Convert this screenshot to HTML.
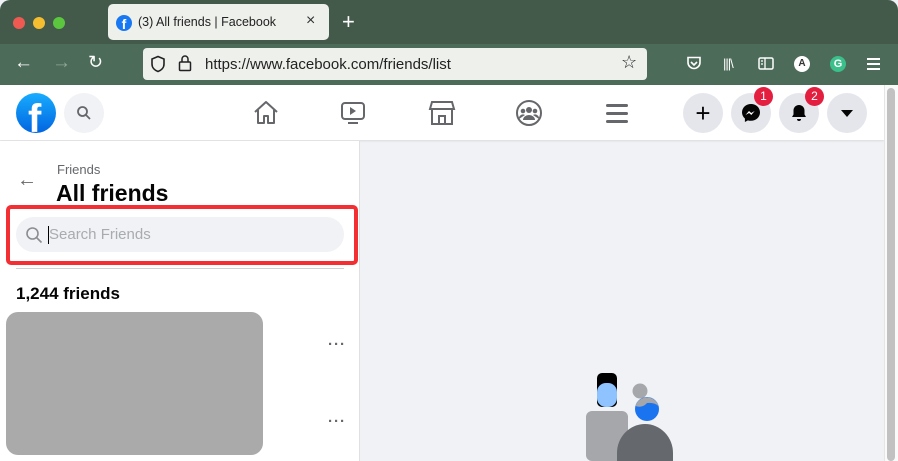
<!DOCTYPE html>
<html><head><style>
*{margin:0;padding:0;box-sizing:border-box}
body{width:898px;height:461px;overflow:hidden;font-family:"Liberation Sans",sans-serif;background:#f0f2f5;position:relative}
.a{position:absolute}
</style></head><body>
<div class="a" style="left:0;top:0;width:898px;height:44px;background:#435a4b;border-radius:10px 10px 0 0"></div>
<div class="a" style="left:13px;top:17px;width:12px;height:12px;border-radius:50%;background:#ee5a52"></div>
<div class="a" style="left:33px;top:17px;width:12px;height:12px;border-radius:50%;background:#f5bd30"></div>
<div class="a" style="left:53px;top:17px;width:12px;height:12px;border-radius:50%;background:#5ac73f"></div>
<div class="a" style="left:108px;top:4px;width:221px;height:36px;background:#eef0ec;border-radius:5px"></div>
<div class="a" style="left:116px;top:15px;width:16px;height:16px;border-radius:50%;background:#1877f2;color:#fff;font-weight:bold;font-size:14px;text-align:center;line-height:19px;overflow:hidden">f</div>
<div class="a" style="left:138px;top:15px;font-size:12.5px;color:#222">(3) All friends | Facebook</div>
<div class="a" style="left:306px;top:12px;font-size:16px;color:#333">×</div>
<div class="a" style="left:342px;top:9px;font-size:22px;color:#fff;font-weight:300">+</div>
<div class="a" style="left:0;top:44px;width:898px;height:41px;background:#4d6b59"></div>
<div class="a" style="left:14px;top:52px;font-size:19px;color:#fff">←</div>
<div class="a" style="left:52px;top:52px;font-size:19px;color:#8fa598">→</div>
<div class="a" style="left:88px;top:52px;font-size:18px;color:#fff">↻</div>
<div class="a" style="left:143px;top:48px;width:504px;height:32px;background:#eef0ec;border-radius:4px"></div>
<svg class="a" style="left:150px;top:55px" width="16" height="18" viewBox="0 0 16 18"><path d="M8 1.5L2 4v5c0 4 3 6.5 6 7.5 3-1 6-3.5 6-7.5V4z" fill="none" stroke="#222" stroke-width="1.6"/></svg>
<svg class="a" style="left:178px;top:54px" width="14" height="18" viewBox="0 0 14 18"><rect x="1.5" y="8" width="11" height="8.5" rx="1" fill="none" stroke="#222" stroke-width="1.5"/><path d="M4 8V5a3 3 0 0 1 6 0v3" fill="none" stroke="#222" stroke-width="1.5"/></svg>
<div class="a" style="left:205px;top:56px;font-size:15px;color:#222">https://www.facebook.com/friends/list</div>
<div class="a" style="left:621px;top:52px;font-size:18px;color:#222">☆</div>
<svg class="a" style="left:686px;top:56px" width="16" height="15" viewBox="0 0 16 15"><path d="M2 1.5h12v5a6 6 0 0 1-12 0z" fill="none" stroke="#fff" stroke-width="1.6"/><path d="M5 6l3 3 3-3" fill="none" stroke="#fff" stroke-width="1.6"/></svg>
<div class="a" style="left:723px;top:56px;font-size:13px;color:#fff;letter-spacing:-1px">|||\</div>
<svg class="a" style="left:758px;top:57px" width="16" height="13" viewBox="0 0 16 13"><rect x="1" y="1" width="14" height="11" rx="1.5" fill="none" stroke="#fff" stroke-width="1.5"/><path d="M7 1v11M3 4h2M3 7h2" stroke="#fff" stroke-width="1.3"/></svg>
<div class="a" style="left:794px;top:56px;width:16px;height:16px;border-radius:50%;background:#fff;color:#333;font-size:10px;font-weight:bold;text-align:center;line-height:16px">A</div>
<div class="a" style="left:830px;top:56px;width:16px;height:16px;border-radius:50%;background:#3bbf8b;color:#fff;font-size:11px;font-weight:bold;text-align:center;line-height:16px">G</div>
<div class="a" style="left:867px;top:58px;width:13px;height:2px;background:#fff;box-shadow:0 5px 0 #fff,0 10px 0 #fff"></div>
<div class="a" style="left:0;top:85px;width:884px;height:55px;background:#fff;box-shadow:0 1px 2px rgba(0,0,0,.1)"></div>
<div class="a" style="left:16px;top:93px;width:40px;height:40px;border-radius:50%;background:linear-gradient(#18acfe,#0165e1);overflow:hidden"><div style="position:absolute;left:12px;top:4px;color:#fff;font-weight:bold;font-size:40px;line-height:44px">f</div></div>
<div class="a" style="left:64px;top:93px;width:40px;height:40px;border-radius:50%;background:#f0f2f5"></div>
<svg class="a" style="left:76px;top:105px" width="16" height="16" viewBox="0 0 16 16"><circle cx="6.5" cy="6.5" r="4.5" fill="none" stroke="#65676b" stroke-width="1.8"/><path d="M10 10l4 4" stroke="#65676b" stroke-width="1.8"/></svg>
<svg class="a" style="left:252px;top:99px" width="28" height="28" viewBox="0 0 28 28"><path d="M3 13L14 3l11 10M6 11v13h6v-7h4v7h6V11" fill="none" stroke="#65676b" stroke-width="2" stroke-linejoin="round"/></svg>
<svg class="a" style="left:340px;top:100px" width="26" height="26" viewBox="0 0 26 26"><rect x="2" y="3" width="22" height="16" rx="3" fill="none" stroke="#65676b" stroke-width="2"/><path d="M10 7v8l6-4z" fill="#65676b"/><path d="M8 23h10" stroke="#65676b" stroke-width="2"/></svg>
<svg class="a" style="left:428px;top:100px" width="28" height="26" viewBox="0 0 28 26"><path d="M4 2h20l2 7H2z" fill="none" stroke="#65676b" stroke-width="2"/><path d="M4 9v15h20V9M11 24v-8h6v8" fill="none" stroke="#65676b" stroke-width="2"/></svg>
<svg class="a" style="left:515px;top:99px" width="28" height="28" viewBox="0 0 28 28"><circle cx="14" cy="14" r="12" fill="none" stroke="#65676b" stroke-width="2"/><circle cx="14" cy="11" r="3" fill="#65676b"/><circle cx="8" cy="12" r="2.3" fill="#65676b"/><circle cx="20" cy="12" r="2.3" fill="#65676b"/><path d="M8 21a6 5 0 0 1 12 0z M4 20a4 4 0 0 1 6-4 M24 20a4 4 0 0 0-6-4" fill="#65676b"/></svg>
<div class="a" style="left:606px;top:104px;width:22px;height:3px;background:#65676b;box-shadow:0 8px 0 #65676b,0 16px 0 #65676b;border-radius:2px"></div>
<div class="a" style="left:683px;top:93px;width:40px;height:40px;border-radius:50%;background:#e4e6eb;font-size:26px;text-align:center;line-height:40px;color:#050505">+</div>
<div class="a" style="left:731px;top:93px;width:40px;height:40px;border-radius:50%;background:#e4e6eb"></div>
<svg class="a" style="left:741px;top:103px" width="20" height="20" viewBox="0 0 20 20"><path d="M10 1C5 1 1 4.7 1 9.4c0 2.5 1.1 4.6 2.9 6.1V19l3-1.6c1 .3 2 .4 3.1.4 5 0 9-3.7 9-8.4S15 1 10 1z" fill="#050505"/><path d="M4.5 12l3.5-4 2.2 2 3.5-2-3.4 4-2.2-2z" fill="#fff"/></svg>
<div class="a" style="left:754px;top:87px;width:19px;height:19px;border-radius:50%;background:#e41e3f;color:#fff;font-size:12px;text-align:center;line-height:19px">1</div>
<div class="a" style="left:779px;top:93px;width:40px;height:40px;border-radius:50%;background:#e4e6eb"></div>
<svg class="a" style="left:789px;top:103px" width="20" height="20" viewBox="0 0 20 20"><path d="M10 2c-3.3 0-5.5 2.5-5.5 5.5v4L3 14h14l-1.5-2.5v-4C15.5 4.5 13.3 2 10 2z M8 16a2 2 0 0 0 4 0z" fill="#050505"/></svg>
<div class="a" style="left:805px;top:87px;width:19px;height:19px;border-radius:50%;background:#e41e3f;color:#fff;font-size:12px;text-align:center;line-height:19px">2</div>
<div class="a" style="left:827px;top:93px;width:40px;height:40px;border-radius:50%;background:#e4e6eb"></div>
<div class="a" style="left:841px;top:110px;width:0;height:0;border-left:6px solid transparent;border-right:6px solid transparent;border-top:7px solid #050505"></div>
<div class="a" style="left:884px;top:85px;width:14px;height:376px;background:#fafafa;border-left:1px solid #e5e5e5"></div>
<div class="a" style="left:887px;top:88px;width:8px;height:373px;background:#c1c1c1;border-radius:4px"></div>
<div class="a" style="left:0;top:141px;width:360px;height:320px;background:#fff;border-right:1px solid #e0e0e0"></div>
<div class="a" style="left:17px;top:169px;font-size:20px;color:#65676b">←</div>
<div class="a" style="left:57px;top:162px;font-size:13px;color:#65676b">Friends</div>
<div class="a" style="left:56px;top:180px;font-size:23px;font-weight:bold;color:#050505">All friends</div>
<div class="a" style="left:6px;top:205px;width:352px;height:60px;border:4px solid #f32f33;border-radius:5px"></div>
<div class="a" style="left:16px;top:217px;width:328px;height:35px;border-radius:18px;background:#f0f2f5"></div>
<svg class="a" style="left:25px;top:226px" width="18" height="18" viewBox="0 0 18 18"><circle cx="7.5" cy="7.5" r="5.5" fill="none" stroke="#8a8d91" stroke-width="1.6"/><path d="M11.5 11.5l5 5" stroke="#8a8d91" stroke-width="1.6"/></svg>
<div class="a" style="left:48px;top:226px;width:1px;height:18px;background:#000"></div>
<div class="a" style="left:49px;top:226px;font-size:15px;color:#a8abaf">Search Friends</div>
<div class="a" style="left:16px;top:268px;width:328px;height:1px;background:#ced0d4"></div>
<div class="a" style="left:16px;top:284px;font-size:17px;font-weight:bold;color:#050505">1,244 friends</div>
<div class="a" style="left:6px;top:312px;width:257px;height:143px;border-radius:12px;background:#aaa"></div>
<div class="a" style="left:328px;top:336px;font-size:15px;font-weight:bold;color:#65676b;letter-spacing:1px">···</div>
<div class="a" style="left:328px;top:413px;font-size:15px;font-weight:bold;color:#65676b;letter-spacing:1px">···</div>
<svg class="a" style="left:0;top:0" width="898" height="461" viewBox="0 0 898 461">
<rect x="586" y="411" width="42" height="50" rx="6" fill="#a5a7ab"/>
<rect x="597" y="373" width="20" height="34" rx="5" fill="#000"/>
<rect x="597" y="383" width="20" height="24" rx="9" fill="#8ec3ff"/>
<circle cx="640" cy="391" r="7.5" fill="#a5a7ab"/>
<circle cx="647" cy="409" r="12" fill="#1a74f0"/>
<path d="M635.5 406a12 12 0 0 1 23 0a12 8 0 0 0-11.5 -3a10 10 0 0 1-11.5 3z" fill="#a5a7ab"/>
<path d="M617 461v-8a28 29 0 0 1 56 0v8z" fill="#65686c"/>
</svg>
</body></html>
